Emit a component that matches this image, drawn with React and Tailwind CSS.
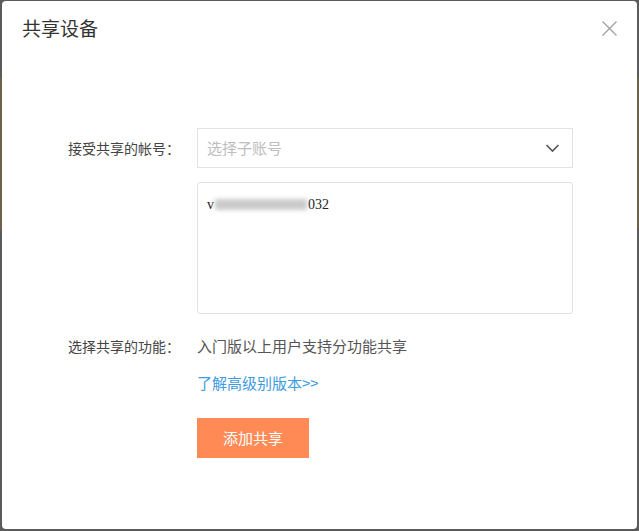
import React from "react";

export default function App() {
  return (
    <div className="w-[639px] h-[531px] bg-[#5b5b5b] pt-[1px] pl-[2px] pr-[2px] pb-[2px] relative overflow-hidden">
      <div className="absolute left-0 top-[78px] w-[2px] h-[152px] bg-[#6e6348]" />
      <div className="absolute right-0 top-[78px] w-[2px] h-[150px] bg-[#6e6348]" />
      <div
        className="relative w-full h-full bg-white rounded-[4px] flex flex-col"
        style={{ fontFamily: '"Noto Sans CJK SC", "Noto Sans", sans-serif' }}
      >
        <div className="flex items-start justify-between h-[60px]">
          <div className="ml-[20px] mt-[14px] text-[19px] leading-[26px] text-[#333]">共享设备</div>
          <button className="mr-[19px] mt-[19px] w-[17px] h-[17px] flex items-center justify-center">
            <svg width="17" height="17" viewBox="0 0 17 17" fill="none" stroke="#a0a0a0" strokeWidth="1.3">
              <path d="M1.5 1.5 L15.5 15.5 M15.5 1.5 L1.5 15.5" />
            </svg>
          </button>
        </div>

        <div className="mt-[67px] flex items-center">
          <div className="w-[178px] text-right text-[14px] text-[#444]">接受共享的帐号：</div>
          <div className="ml-[17px] w-[376px] h-[40px] border border-[#e3e3e3] flex items-center justify-between px-[9px]">
            <span className="text-[15px] text-[#bdbdbd]">选择子账号</span>
            <svg width="15" height="10" viewBox="0 0 15 10" fill="none" stroke="#555" strokeWidth="1.6" className="mr-[3px]">
              <path d="M1.5 2 L7.5 8 L13.5 2" />
            </svg>
          </div>
        </div>

        <div className="mt-[14px] ml-[195px] w-[376px] h-[132px] border border-[#e3e3e3] rounded-[3px] px-[9px] pt-[13px]">
          <div className="flex items-center h-[16px] text-[14px] text-[#222]" style={{ fontFamily: '"Liberation Serif", serif' }}>
            <span>v</span>
            <span className="w-[92px] h-[11px] bg-[#cbcbcb] blur-[2px] mx-[1px]" />
            <span>032</span>
          </div>
        </div>

        <div className="mt-[21px] flex items-center h-[22px]">
          <div className="w-[178px] text-right text-[14px] text-[#444]">选择共享的功能：</div>
          <div className="ml-[17px] text-[15px] text-[#555]">入门版以上用户支持分功能共享</div>
        </div>

        <div className="mt-[15px] ml-[195px] h-[22px] flex items-center text-[15px] text-[#3d9be0]">了解高级别版本&gt;&gt;</div>

        <button className="mt-[24px] ml-[195px] w-[112px] h-[40px] bg-[#ff8a56] text-white text-[15px] flex items-center justify-center">
          添加共享
        </button>
      </div>
    </div>
  );
}
